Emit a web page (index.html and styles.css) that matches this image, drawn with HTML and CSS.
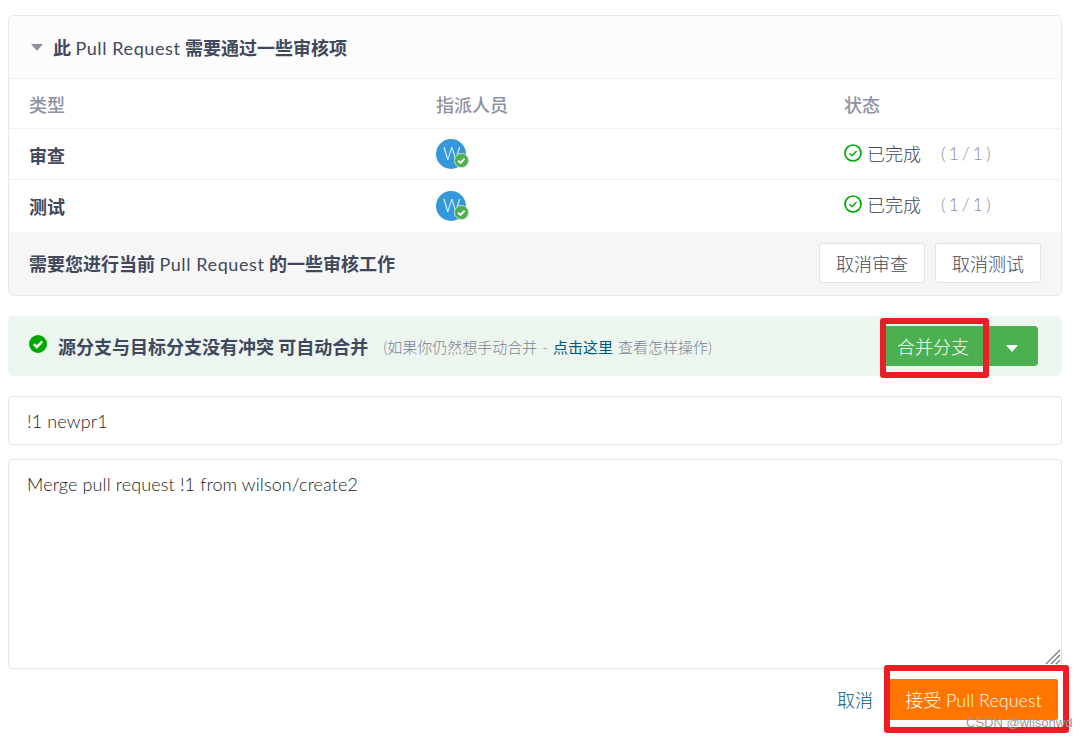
FILE: index.html
```html
<!DOCTYPE html>
<html lang="zh-CN">
<head>
    <meta charset="UTF-8">
    <title>Pull Request</title>
    <link rel="stylesheet" href="styles.css">
</head>
<body>
    <div class="container">
        <div class="review">
            <div class="review-title">
                <span class="caret"></span>
                <b>此 <span class="latin">Pull Request</span> 需要通过一些审核项</b>
            </div>
            <div class="row row-head">
                <div>类型</div>
                <div>指派人员</div>
                <div>状态</div>
            </div>
            <div class="row">
                <div class="row-name">审查</div>
                <div class="avatar">W
                    <svg class="avatar-ok" viewBox="0 0 16 16"><circle cx="8" cy="8" r="7.5" fill="#4caf50" stroke="#c9e6ca"/><path d="M4.5 8.3l2.4 2.3 4.4-4.6" fill="none" stroke="#fff" stroke-width="2"/></svg>
                </div>
                <div class="status">
                    <svg class="status-icon" viewBox="0 0 18 18"><circle cx="9" cy="9" r="8" fill="none" stroke="#00a900" stroke-width="1.7"/><path d="M5.5 9.2l2.5 2.5 4.6-4.8" fill="none" stroke="#00a900" stroke-width="1.4"/></svg>
                    <span>已完成</span>
                    <span class="count">( 1 / 1 )</span>
                </div>
            </div>
            <div class="row row-last">
                <div class="row-name">测试</div>
                <div class="avatar">W
                    <svg class="avatar-ok" viewBox="0 0 16 16"><circle cx="8" cy="8" r="7.5" fill="#4caf50" stroke="#c9e6ca"/><path d="M4.5 8.3l2.4 2.3 4.4-4.6" fill="none" stroke="#fff" stroke-width="2"/></svg>
                </div>
                <div class="status">
                    <svg class="status-icon" viewBox="0 0 18 18"><circle cx="9" cy="9" r="8" fill="none" stroke="#00a900" stroke-width="1.7"/><path d="M5.5 9.2l2.5 2.5 4.6-4.8" fill="none" stroke="#00a900" stroke-width="1.4"/></svg>
                    <span>已完成</span>
                    <span class="count">( 1 / 1 )</span>
                </div>
            </div>
            <div class="review-foot">
                <b>需要您进行当前 <span class="latin">Pull Request</span> 的一些审核工作</b>
                <div class="foot-btns">
                    <button class="btn">取消审查</button>
                    <button class="btn">取消测试</button>
                </div>
            </div>
        </div>

        <div class="merge-bar">
            <svg class="merge-icon" viewBox="0 0 18 18"><circle cx="9" cy="9" r="9" fill="#00a900"/><path d="M4.8 9.2l3 2.8 5.4-5.6" fill="none" stroke="#fff" stroke-width="2.4"/></svg>
            <b class="merge-title">源分支与目标分支没有冲突 可自动合并</b>
            <span class="merge-hint">(如果你仍然想手动合并 - <a href="#">点击这里</a> 查看怎样操作)</span>
            <div class="merge-btns">
                <button class="btn-green">合并分支</button>
                <button class="btn-green btn-drop"><span class="caret caret-white"></span></button>
            </div>
        </div>

        <input class="field" type="text" value="!1 newpr1">
        <div class="area-wrap">
            <textarea class="field field-area">Merge pull request !1 from wilson/create2</textarea>
            <svg class="resizer" viewBox="0 0 16 16"><path d="M1 15L15 1M6 15L15 6M11 15L15 11" fill="none" stroke="#777" stroke-width="1.2"/></svg>
        </div>

        <div class="actions">
            <a href="#">取消</a>
            <button class="btn-orange">接受 Pull Request</button>
        </div>
    </div>

    <!-- annotations on top of the screenshot -->
    <div class="mark mark-merge"></div>
    <div class="mark mark-accept"></div>
    <div class="watermark">CSDN @wilsonwd</div>
</body>
</html>
```

FILE: styles.css
```css
*{
    margin: 0;
    padding: 0;
    box-sizing: border-box;
    font-family: Lato, 'Noto Sans CJK SC', sans-serif;
}
html,body{
    height: 100%;
    overflow: hidden;
    background-color: #fff;
}
body{
    position: relative;
    font-size: 18px;
    color: #40485b;
}
a{
    color: #005980;
    text-decoration: none;
}
.latin{
    font-weight: 400;
    letter-spacing: 0.6px;
}
.container{
    width: 1062px;
    padding: 15px 0 0 8px;
}
.review{
    border: 1px solid #e8e8e8;
    border-radius: 5px;
    height: 281px;
    overflow: hidden;
}
.review-title{
    height: 63px;
    padding-left: 22px;
    display: flex;
    align-items: center;
    gap: 10px;
    background-color: #fcfcfc;
    border-bottom: 1px solid #f1f1f1;
}
.caret{
    display: inline-block;
    width: 0;
    height: 0;
    border-left: 6px solid transparent;
    border-right: 6px solid transparent;
    border-top: 7px solid #8c92a4;
}
.caret-white{
    border-top-color: #fff;
}
.row{
    display: grid;
    grid-template-columns: 407px 408px 1fr;
    align-items: center;
    height: 51px;
    padding-left: 20px;
    border-bottom: 1px solid #f1f1f1;
}
.row-last{
    height: 52px;
    border-bottom: none;
}
.row-head{
    height: 50px;
    color: #8c92a4;
    font-weight: 500;
    border-bottom-color: #eef1f5;
}
.row-name{
    margin-top: 2px;
    font-weight: 700;
}
.row-last .row-name{
    margin-top: 0;
}
.avatar{
    position: relative;
    width: 30px;
    height: 30px;
    border-radius: 50%;
    background-color: #3498db;
    color: #fff;
    font-size: 17px;
    font-weight: 300;
    line-height: 30px;
    padding-left: 7px;
}
.avatar-ok{
    position: absolute;
    left: 18px;
    top: 14px;
    width: 15px;
    height: 15px;
}
.status{
    display: flex;
    align-items: center;
    margin-top: -2px;
    font-weight: 300;
}
.row-last .status{
    margin-top: -4px;
}
.status-icon{
    width: 18px;
    height: 18px;
    margin-right: 5px;
}
.count{
    margin-left: 20px;
    color: #8c92a4;
    word-spacing: -2px;
}
.review-foot{
    height: 63px;
    background-color: #f6f6f7;
    padding: 0 20px 2px;
    display: flex;
    align-items: center;
    justify-content: space-between;
}
.foot-btns{
    display: flex;
    gap: 10px;
}
.btn{
    width: 106px;
    height: 40px;
    background-color: #fff;
    border: 1px solid #dfe3ea;
    border-radius: 3px;
    color: #40485b;
    font-size: 18px;
    font-weight: 300;
}
.merge-bar{
    margin-top: 20px;
    height: 60px;
    padding: 0 24px 0 21px;
    background-color: #ecf5ee;
    border-radius: 5px;
    display: flex;
    align-items: center;
}
.merge-icon{
    width: 18px;
    height: 18px;
    margin-top: -4px;
    margin-right: 11px;
}
.merge-title{
    font-size: 18px;
}
.merge-hint{
    margin-left: 15px;
    font-size: 15px;
    font-weight: 300;
    color: #7d8394;
    word-spacing: 1px;
}
.merge-hint a{
    font-weight: 400;
}
.merge-btns{
    margin-left: auto;
    display: flex;
}
.btn-green{
    width: 104px;
    height: 40px;
    border: none;
    padding-right: 8px;
    background-color: #4caf50;
    color: #fff;
    font-size: 18px;
    font-weight: 300;
}
.btn-drop{
    width: 49px;
    padding-right: 4px;
    padding-bottom: 3px;
    border-radius: 0 4px 4px 0;
}
.field{
    display: block;
    width: 100%;
    height: 49px;
    margin-top: 20px;
    padding: 0 18px;
    border: 1px solid #e2e2ea;
    border-radius: 4px;
    color: #222;
    font-size: 18px;
    font-weight: 300;
    letter-spacing: 0.12px;
    outline: none;
}
.area-wrap{
    position: relative;
    margin-top: 14px;
}
.field-area{
    height: 210px;
    margin-top: 0;
    padding: 11px 18px;
    line-height: 26px;
    resize: none;
}
.resizer{
    position: absolute;
    right: 1px;
    bottom: 4px;
    width: 16px;
    height: 16px;
}
.actions{
    margin-top: 10px;
    padding-right: 4px;
    display: flex;
    align-items: center;
    justify-content: flex-end;
    gap: 16px;
}
.actions a{
    margin-top: -2px;
    font-weight: 300;
}
.btn-orange{
    width: 169px;
    height: 41px;
    border: none;
    padding-bottom: 2px;
    border-radius: 2px;
    background-color: #ff7500;
    color: #fff;
    font-size: 18px;
    font-weight: 300;
}
.mark{
    position: absolute;
    border: 6px solid #ee1c25;
    border-radius: 3px;
}
.mark-merge{
    left: 880px;
    top: 318px;
    width: 109px;
    height: 60px;
}
.mark-accept{
    left: 884px;
    top: 665px;
    width: 185px;
    height: 68px;
}
.watermark{
    position: absolute;
    left: 966px;
    top: 715px;
    font-family: 'Liberation Sans', sans-serif;
    font-size: 13px;
    color: #999;
    white-space: nowrap;
}
```
